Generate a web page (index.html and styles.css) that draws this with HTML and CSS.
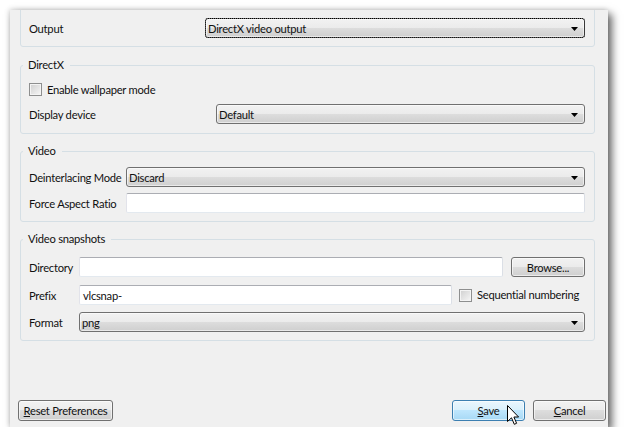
FILE: index.html
```html
<!DOCTYPE html>
<html>
<head>
<meta charset="utf-8">
<link rel="stylesheet" href="styles.css">
</head>
<body>
<div class="window">
  <div class="pane">
    <div class="group g-output">
      <div class="row">
        <span class="label">Output</span>
        <div class="combo focus">DirectX video output</div>
      </div>
    </div>

    <div class="group g-directx">
      <div class="title">DirectX</div>
      <div class="check-row">
        <span class="checkbox"></span><span>Enable wallpaper mode</span>
      </div>
      <div class="row r-display">
        <span class="label">Display device</span>
        <div class="combo">Default</div>
      </div>
    </div>

    <div class="group g-video">
      <div class="title">Video</div>
      <div class="row r-deint">
        <span class="label">Deinterlacing Mode</span>
        <div class="combo">Discard</div>
      </div>
      <div class="row r-aspect">
        <span class="label">Force Aspect Ratio</span>
        <div class="textbox"></div>
      </div>
    </div>

    <div class="group g-snap">
      <div class="title">Video snapshots</div>
      <div class="row r-dir">
        <span class="label">Directory</span>
        <div class="textbox"></div>
        <div class="btn browse">Browse...</div>
      </div>
      <div class="row r-prefix">
        <span class="label">Prefix</span>
        <div class="textbox">vlcsnap-</div>
        <span class="checkbox"></span><span class="seq">Sequential numbering</span>
      </div>
      <div class="row r-format">
        <span class="label">Format</span>
        <div class="combo">png</div>
      </div>
    </div>
  </div>

  <div class="buttons">
    <div class="btn reset"><span><u>R</u>eset Preferences</span></div>
    <div class="spacer"></div>
    <div class="btn save"><span><u>S</u>ave</span></div>
    <div class="btn cancel"><span><u>C</u>ancel</span></div>
  </div>

  <svg class="cursor" width="13" height="21" viewBox="0 0 13 21">
    <path d="M0.5 0.5 V16.5 L4.5 12.8 L7.3 19.3 L9.6 18.3 L6.9 12 H11.6 Z" fill="#fff" stroke="#000" stroke-width="1" stroke-linejoin="miter"/>
  </svg>
</div>
</body>
</html>
```
FILE: styles.css
```css
* { box-sizing: border-box; }
html, body { margin: 0; background: #fff; }
body {
  font: 11.2px/14px Lato, "Liberation Sans", sans-serif;
  letter-spacing: -0.25px;
  color: #111;
  white-space: nowrap;
}

.window {
  position: relative;
  margin: 10px 0 0 10px;
  width: 598px;
  height: 417px;
  background: #f0f0f0;
  display: flex;
  flex-direction: column;
  overflow: hidden;
  box-shadow: 4px 4px 8px rgba(0,0,0,.6), -1px -1px 5px rgba(0,0,0,.15);
}

.pane {
  flex: 1;
  padding: 0 13px 0 10px;
}

.group {
  border: 1px solid #d5dfe5;
  border-radius: 3px;
  padding: 0 9px 8px 8px;
}
.g-output { margin-top: -10px; padding-top: 17px; }
.g-directx { margin-top: 18px; padding-bottom: 9px; }
.g-video { margin-top: 17px; }
.g-snap { margin-top: 17px; }

.title {
  width: fit-content;
  height: 14px;
  margin: -8px 0 0 -6px;
  padding: 0 6px 0 5px;
  background: #f0f0f0;
}

.row {
  display: flex;
  align-items: center;
  height: 20px;
}
.label { flex: none; padding-top: 1px; }
.g-output .label { width: 176px; }
.g-directx .label { width: 187px; }
.g-video .label { width: 97px; }
.g-snap .label { width: 50px; }

.check-row {
  display: flex;
  align-items: center;
  height: 19px;
  margin-top: 8px;
}
.check-row .checkbox { margin-right: 5px; }
.r-display { margin-top: 5px; }
.r-deint { margin-top: 9px; }
.r-aspect { margin-top: 6px; }
.r-dir { margin-top: 11px; }
.r-prefix { margin-top: 8px; }
.r-format { margin-top: 7px; }

.combo {
  position: relative;
  flex: 1;
  min-width: 0;
  height: 20px;
  padding: 1px 0 0 2px;
  display: flex;
  align-items: center;
  border: 1px solid #707070;
  border-radius: 3px;
  background: linear-gradient(#f2f2f2 0, #ebebeb 50%, #dddddd 50%, #cfcfcf 100%);
  box-shadow: inset 0 0 0 1px rgba(255,255,255,.55);
}
.combo::after {
  content: "";
  position: absolute;
  right: 6px;
  top: 8px;
  width: 7px;
  height: 4px;
  background: #000;
  clip-path: polygon(0 0, 100% 0, 50% 100%);
}
.combo.focus {
  outline: 1px dotted #000;
  outline-offset: -1px;
}

.textbox {
  flex: 1;
  min-width: 0;
  height: 20px;
  padding: 1px 0 0 3px;
  display: flex;
  align-items: center;
  background: #fff;
  border: 1px solid #e3e9ef;
  border-top-color: #abadb3;
  border-left-color: #e2e3ea;
  border-right-color: #dbdfe6;
  border-radius: 2px;
}
.r-prefix .textbox { flex: none; width: 373px; margin-right: 7px; }

.checkbox {
  flex: none;
  width: 13px;
  height: 13px;
  border: 1px solid #8e8f8f;
  background: linear-gradient(135deg, #cfcfcf, #f7f7f7);
  box-shadow: inset 0 0 0 1px #f4f4f4;
}
.seq { margin-left: 5px; }

.btn {
  display: flex;
  align-items: center;
  justify-content: center;
  flex: none;
  height: 21px;
  padding-top: 1px;
  border: 1px solid #707070;
  border-radius: 3px;
  background: linear-gradient(#f2f2f2 0, #ebebeb 50%, #dddddd 50%, #cfcfcf 100%);
  box-shadow: inset 0 0 0 1px rgba(255,255,255,.6);
}
.browse { width: 74px; height: 20px; margin-left: 8px; }

.buttons {
  display: flex;
  align-items: center;
  padding: 0 2px 6px 8px;
}
.spacer { flex: 1; }
.reset { width: 95px; }
.save {
  width: 73px;
  border-color: #3c7fb1;
  background: linear-gradient(#eaf6fd 0, #d9f0fc 50%, #bee6fd 50%, #a7d9f5 100%);
}
.cancel { width: 73px; margin-left: 8px; }

.cursor {
  position: absolute;
  left: 497px;
  top: 395px;
}
```
